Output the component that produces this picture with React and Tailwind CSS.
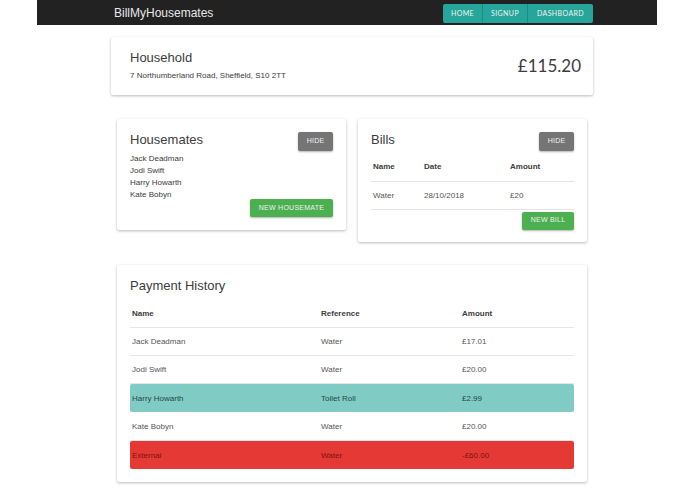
const sans = "font-['Liberation_Sans',sans-serif]";

function NavLink({ children, className = "" }) {
  return (
    <a className={`flex h-[19px] items-center bg-[#26a69a] font-['Lato',sans-serif] text-[7px] tracking-[0.4px] text-[#f2f2f2] ${className}`}>
      {children}
    </a>
  );
}

function Card({ className = "", children }) {
  return (
    <div className={`rounded-[2px] bg-white shadow-[0_1px_3px_rgba(0,0,0,0.28)] ${className}`}>
      {children}
    </div>
  );
}

function Btn({ className = "", children }) {
  return (
    <button className={`flex items-center justify-center rounded-[2px] text-[7px] tracking-[0.25px] text-[#f0f0f0] shadow-[0_1px_2px_rgba(0,0,0,0.3)] ${className}`}>
      {children}
    </button>
  );
}

const history = [
  { name: "Jack Deadman", ref: "Water", amount: "£17.01" },
  { name: "Jodi Swift", ref: "Water", amount: "£20.00" },
  { name: "Harry Howarth", ref: "Toilet Roll", amount: "£2.99", bg: "bg-[#80cbc4] text-[#254a46]" },
  { name: "Kate Bobyn", ref: "Water", amount: "£20.00" },
  { name: "External", ref: "Water", amount: "-£60.00", bg: "bg-[#e53935] text-[#7a1512]" },
];

export default function App() {
  return (
    <div className={`${sans} h-[494px] w-[695px] overflow-hidden bg-white text-[#3c3c3c]`}>
      <nav className="ml-[37px] flex h-[25px] w-[620px] items-center justify-between bg-[#222222] pl-[77px] pr-[64px]">
        <span className="mt-[1px] text-[12px] text-[#e8e8e8]">BillMyHousemates</span>
        <div className="flex h-[19px] divide-x divide-[#1f8a80] self-start mt-[4px] rounded-[2px]">
          <NavLink className="rounded-l-[2px] w-[40px] justify-center">HOME</NavLink>
          <NavLink className="w-[45px] justify-center">SIGNUP</NavLink>
          <NavLink className="rounded-r-[2px] w-[65px] justify-center">DASHBOARD</NavLink>
        </div>
      </nav>

      <Card className="ml-[111px] mt-[12px] flex h-[58px] w-[482px] items-center justify-between pl-[19px] pr-[12px]">
        <div className="pb-[2px]">
          <div className="text-[13px] leading-[18px]">Household</div>
          <div className="mt-[3px] text-[8px] leading-[12px]">7 Northumberland Road, Sheffield, S10 2TT</div>
        </div>
        <div className="font-['Lato',sans-serif] text-[17px]">£115.20</div>
      </Card>

      <div className="ml-[117px] mt-[24px] flex w-[470px] items-start gap-[12px]">
        <Card className="h-[111px] w-[229px] px-[13px] pt-[13px]">
          <div className="flex items-start justify-between">
            <div className="text-[13px] leading-[15px]">Housemates</div>
            <Btn className="h-[19px] w-[35px] bg-[#757575]">HIDE</Btn>
          </div>
          <ul className="mt-[2px] text-[8px] leading-[12px]">
            <li>Jack Deadman</li>
            <li>Jodi Swift</li>
            <li>Harry Howarth</li>
            <li>Kate Bobyn</li>
          </ul>
          <div className="mt-[-2px] flex justify-end">
            <Btn className="h-[18px] w-[83px] bg-[#4caf50]">NEW HOUSEMATE</Btn>
          </div>
        </Card>

        <Card className="h-[123px] w-[229px] px-[13px] pt-[13px]">
          <div className="flex items-start justify-between">
            <div className="text-[13px] leading-[15px]">Bills</div>
            <Btn className="h-[19px] w-[35px] bg-[#757575]">HIDE</Btn>
          </div>
          <table className="mt-[1px] w-full table-fixed border-collapse text-[8px]">
            <thead>
              <tr className="h-[29px] border-b border-[#e5e5e5] font-bold">
                <td className="w-[53px] pl-[2px] pt-[1px]">Name</td>
                <td className="w-[86px] pt-[1px]">Date</td>
                <td className="pt-[1px]">Amount</td>
              </tr>
            </thead>
            <tbody>
              <tr className="h-[28px] border-b border-[#e5e5e5] text-[#555]">
                <td className="pl-[2px] pt-[1px]">Water</td>
                <td className="pt-[1px]">28/10/2018</td>
                <td className="pt-[1px]">£20</td>
              </tr>
            </tbody>
          </table>
          <div className="mt-[2px] flex justify-end">
            <Btn className="h-[18px] w-[52px] bg-[#4caf50]">NEW BILL</Btn>
          </div>
        </Card>
      </div>

      <Card className="ml-[117px] mt-[23px] h-[217px] w-[470px] px-[13px] pt-[13px]">
        <div className="text-[13px] leading-[15px]">Payment History</div>
        <table className="mt-[7px] w-full table-fixed border-collapse text-[8px]">
          <thead>
            <tr className="h-[27px] border-b border-[#e5e5e5] font-bold">
              <td className="w-[189px] pl-[2px] pt-[1px]">Name</td>
              <td className="w-[141px] pl-[2px] pt-[1px]">Reference</td>
              <td className="pl-[2px] pt-[1px]">Amount</td>
            </tr>
          </thead>
          <tbody>
            {history.map((row) => {
              const cell = `pl-[2px] pt-[1px] ${row.bg ?? ""}`;
              return (
                <tr key={row.name} className={`h-[28.4px] ${row.bg ? "" : "border-b border-[#e5e5e5] text-[#555]"}`}>
                  <td className={`${cell} rounded-l-[2px]`}>{row.name}</td>
                  <td className={cell}>{row.ref}</td>
                  <td className={`${cell} rounded-r-[2px]`}>{row.amount}</td>
                </tr>
              );
            })}
          </tbody>
        </table>
      </Card>
    </div>
  );
}
